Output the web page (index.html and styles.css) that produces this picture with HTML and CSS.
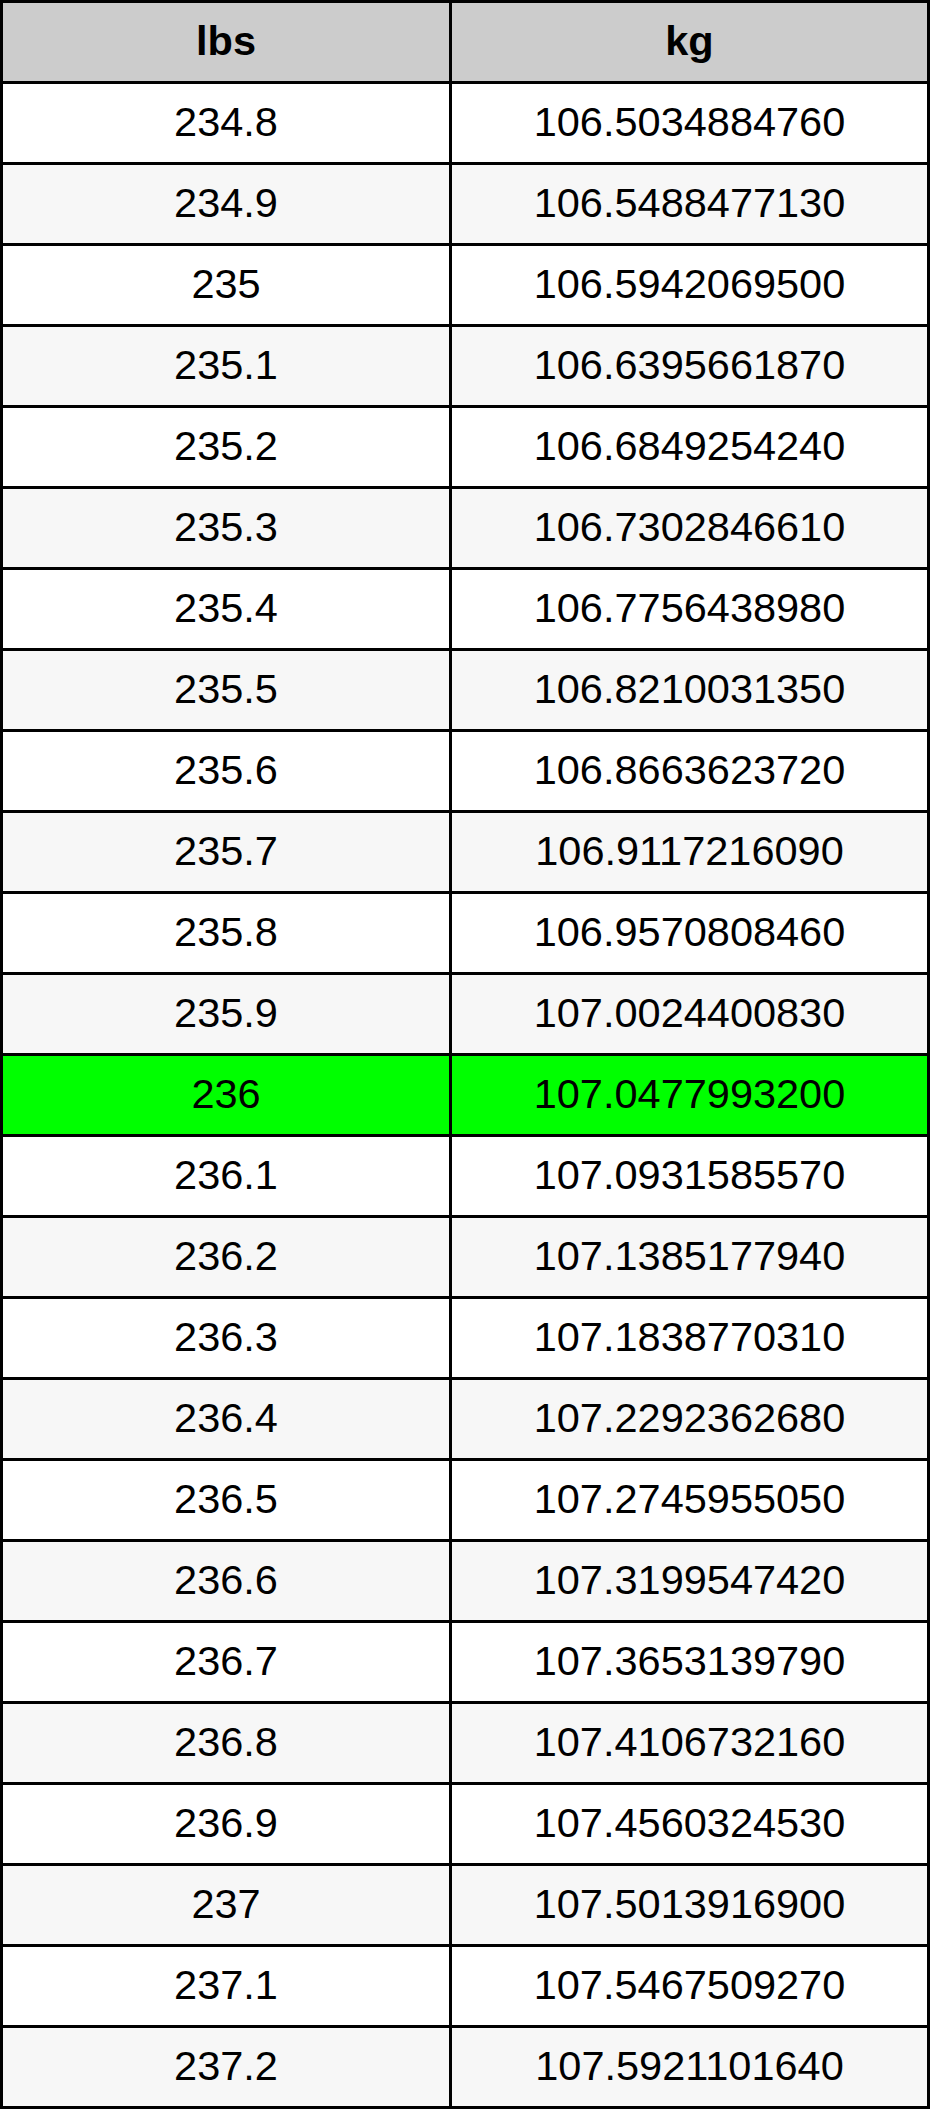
FILE: index.html
```html
<!DOCTYPE html>
<html lang="en">
<head>
<meta charset="utf-8">
<title>lbs to kg</title>
<link rel="stylesheet" href="styles.css">
</head>
<body>
<table class="conv">
<colgroup><col class="c-lbs"><col class="c-kg"></colgroup>
<thead>
<tr><th>lbs</th><th>kg</th></tr>
</thead>
<tbody>
<tr><td>234.8</td><td>106.5034884760</td></tr>
<tr class="alt"><td>234.9</td><td>106.5488477130</td></tr>
<tr><td>235</td><td>106.5942069500</td></tr>
<tr class="alt"><td>235.1</td><td>106.6395661870</td></tr>
<tr><td>235.2</td><td>106.6849254240</td></tr>
<tr class="alt"><td>235.3</td><td>106.7302846610</td></tr>
<tr><td>235.4</td><td>106.7756438980</td></tr>
<tr class="alt"><td>235.5</td><td>106.8210031350</td></tr>
<tr><td>235.6</td><td>106.8663623720</td></tr>
<tr class="alt"><td>235.7</td><td>106.9117216090</td></tr>
<tr><td>235.8</td><td>106.9570808460</td></tr>
<tr class="alt"><td>235.9</td><td>107.0024400830</td></tr>
<tr class="hl"><td>236</td><td>107.0477993200</td></tr>
<tr><td>236.1</td><td>107.0931585570</td></tr>
<tr class="alt"><td>236.2</td><td>107.1385177940</td></tr>
<tr><td>236.3</td><td>107.1838770310</td></tr>
<tr class="alt"><td>236.4</td><td>107.2292362680</td></tr>
<tr><td>236.5</td><td>107.2745955050</td></tr>
<tr class="alt"><td>236.6</td><td>107.3199547420</td></tr>
<tr><td>236.7</td><td>107.3653139790</td></tr>
<tr class="alt"><td>236.8</td><td>107.4106732160</td></tr>
<tr><td>236.9</td><td>107.4560324530</td></tr>
<tr class="alt"><td>237</td><td>107.5013916900</td></tr>
<tr><td>237.1</td><td>107.5467509270</td></tr>
<tr class="alt"><td>237.2</td><td>107.5921101640</td></tr>
</tbody>
</table>
</body>
</html>
```
FILE: styles.css
```css
html, body {
  margin: 0;
  padding: 0;
  background: #fff;
}
.conv {
  width: 930px;
  table-layout: fixed;
  border-collapse: separate;
  border-spacing: 0;
  border-left: 3px solid #000;
  border-top: 3px solid #000;
  font-family: "Liberation Sans", Arial, sans-serif;
  font-size: 41.5px;
  color: #000;
}
.c-lbs { width: 449px; }
.c-kg { width: 478px; }
.conv th, .conv td {
  padding: 0 0 2px;
  height: 76px;
  line-height: 76px;
  text-align: center;
  vertical-align: middle;
  border-right: 3px solid #000;
  border-bottom: 3px solid #000;
  white-space: nowrap;
}
.conv th {
  background: #cccccc;
  font-weight: bold;
}
.conv tr.alt td {
  background: #f7f7f7;
}
.conv tr.hl td {
  background: #00ff00;
}
```
